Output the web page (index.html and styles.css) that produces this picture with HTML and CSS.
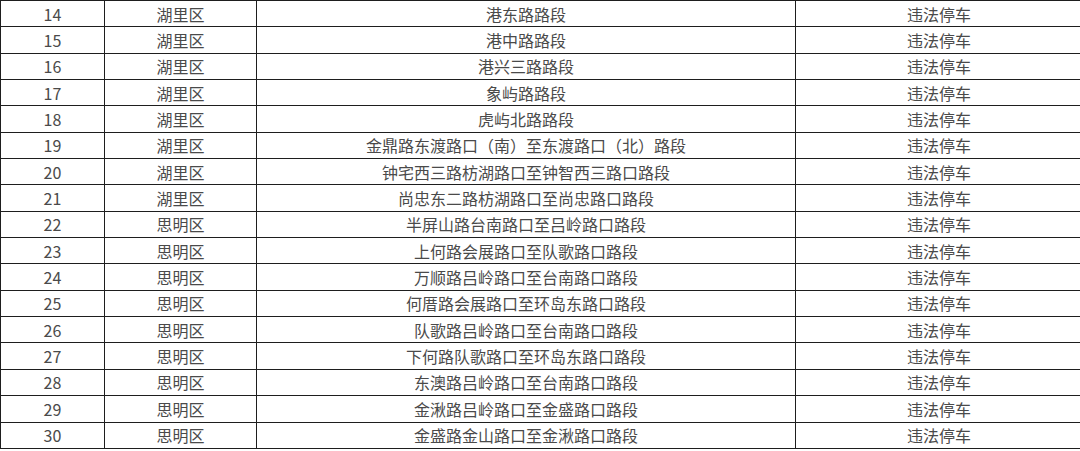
FILE: index.html
```html
<!DOCTYPE html>
<html lang="zh">
<head>
<meta charset="utf-8">
<link rel="stylesheet" href="styles.css">
</head>
<body>
<table class="list">
<colgroup>
<col class="c-no"><col class="c-area"><col class="c-road"><col class="c-type">
</colgroup>
<tbody>
<tr><td>14</td><td>湖里区</td><td>港东路路段</td><td>违法停车</td></tr>
<tr><td>15</td><td>湖里区</td><td>港中路路段</td><td>违法停车</td></tr>
<tr><td>16</td><td>湖里区</td><td>港兴三路路段</td><td>违法停车</td></tr>
<tr><td>17</td><td>湖里区</td><td>象屿路路段</td><td>违法停车</td></tr>
<tr><td>18</td><td>湖里区</td><td>虎屿北路路段</td><td>违法停车</td></tr>
<tr><td>19</td><td>湖里区</td><td>金鼎路东渡路口（南）至东渡路口（北）路段</td><td>违法停车</td></tr>
<tr><td>20</td><td>湖里区</td><td>钟宅西三路枋湖路口至钟智西三路口路段</td><td>违法停车</td></tr>
<tr><td>21</td><td>湖里区</td><td>尚忠东二路枋湖路口至尚忠路口路段</td><td>违法停车</td></tr>
<tr><td>22</td><td>思明区</td><td>半屏山路台南路口至吕岭路口路段</td><td>违法停车</td></tr>
<tr><td>23</td><td>思明区</td><td>上何路会展路口至队歌路口路段</td><td>违法停车</td></tr>
<tr><td>24</td><td>思明区</td><td>万顺路吕岭路口至台南路口路段</td><td>违法停车</td></tr>
<tr><td>25</td><td>思明区</td><td>何厝路会展路口至环岛东路口路段</td><td>违法停车</td></tr>
<tr><td>26</td><td>思明区</td><td>队歌路吕岭路口至台南路口路段</td><td>违法停车</td></tr>
<tr><td>27</td><td>思明区</td><td>下何路队歌路口至环岛东路口路段</td><td>违法停车</td></tr>
<tr><td>28</td><td>思明区</td><td>东澳路吕岭路口至台南路口路段</td><td>违法停车</td></tr>
<tr><td>29</td><td>思明区</td><td>金湫路吕岭路口至金盛路口路段</td><td>违法停车</td></tr>
<tr><td>30</td><td>思明区</td><td>金盛路金山路口至金湫路口路段</td><td>违法停车</td></tr>
</tbody>
</table>
</body>
</html>
```
FILE: styles.css
```css
html, body {
  margin: 0;
  padding: 0;
  background: #ffffff;
}
body {
  overflow: hidden;
  width: 1080px;
  height: 451px;
}
.list {
  border-collapse: collapse;
  table-layout: fixed;
  width: 1082px;
  font-family: "Microsoft YaHei", "Noto Sans CJK SC", "Noto Sans", sans-serif;
  font-size: 16px;
  color: #4a4a4a;
}
.c-no { width: 104px; }
.c-area { width: 152px; }
.c-road { width: 539px; }
.c-type { width: 287px; }
.list tr {
  height: 26.35px;
}
.list td {
  border: 1px solid #1e1e1e;
  padding: 0;
  text-align: center;
  vertical-align: middle;
  line-height: 20px;
  white-space: nowrap;
  overflow: hidden;
}
```
